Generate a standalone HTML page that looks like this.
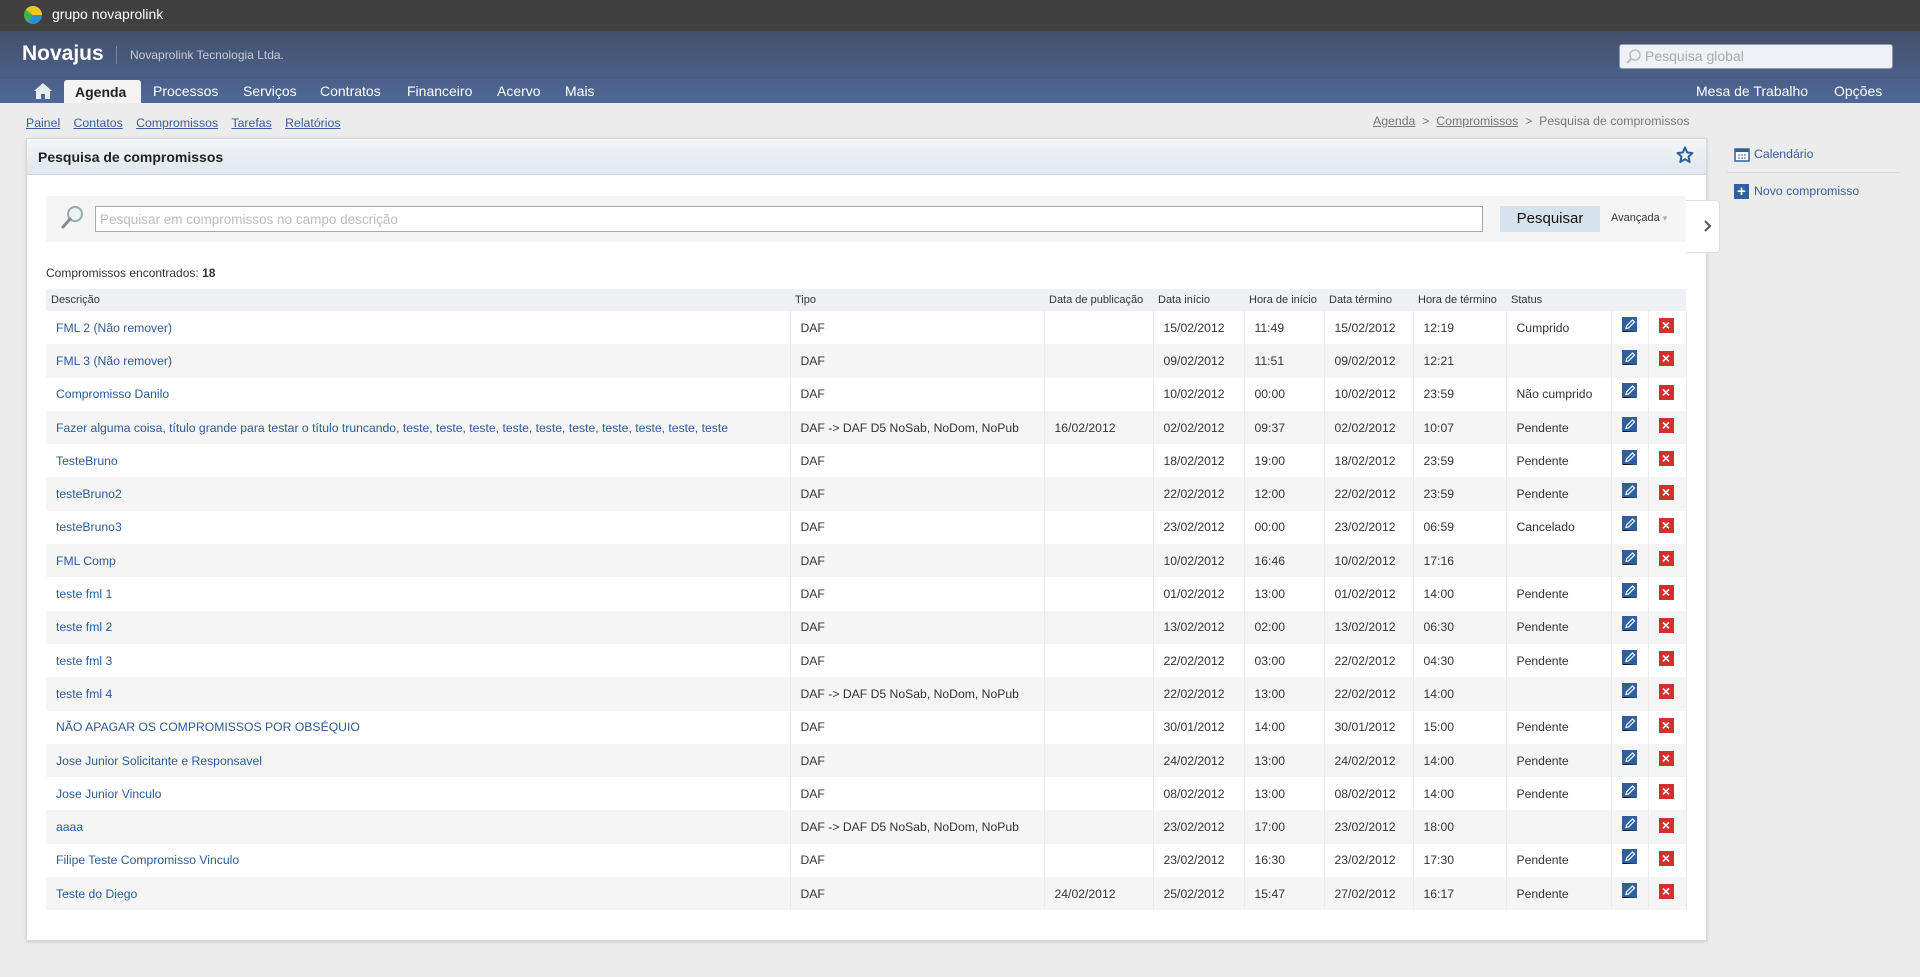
<!DOCTYPE html>
<html><head><meta charset="utf-8"><style>
*{box-sizing:border-box;margin:0;padding:0}
body{width:1920px;height:977px;background:#ececec;font-family:"Liberation Sans",Arial,sans-serif;position:relative;overflow:hidden;color:#333}
.abs{position:absolute}
#top{left:0;top:0;width:1920px;height:31px;background:#404040}
#hdr{left:0;top:31px;width:1920px;height:72px;background:linear-gradient(#44506a,#4e6897)}
#hdr .sep{position:absolute;left:0;top:46px;width:1920px;height:1px;background:#465678}
a{color:#2d5b95}
.nav{color:#fff;font-size:14px;top:83px}
#sub a{font-size:12.3px;color:#3a5d93;text-decoration:underline}
table{border-collapse:collapse;table-layout:fixed}
td,th{font-size:12.2px;height:33.3px;padding:0 0 0 10px;text-align:left;white-space:nowrap;overflow:hidden;border-right:1px solid #ececec}
th{height:22px;font-weight:normal;font-size:11px;padding-left:5px;background:#eef0f3;border-right:none;color:#333}
tr:nth-child(odd) td{background:#f5f5f5}
tr.w td{background:#fff}
td.d{color:#2d5b95;padding-left:10px}
.ed{display:inline-block;width:15px;height:15px;position:relative;top:-2px}
.x{display:inline-block;width:15px;height:15px;background:#d32f2f;color:#fff;font-size:14px;font-weight:bold;line-height:15px;text-align:center;position:relative;top:-2px}
</style></head><body>
<svg width="0" height="0" style="position:absolute"><defs><symbol id="pen" viewBox="0 0 15 15"><rect width="15" height="15" fill="#2f6198"/><path d="M4 11.5 L4.5 9 L10.5 3 L12.5 5 L6.5 11 Z" fill="none" stroke="#fff" stroke-width="1.2"/><path d="M1 15 L1 14 L15 14" stroke="#fff" stroke-width="0"/></symbol></defs></svg>
<div id="top" class="abs"></div>
<div class="abs" style="left:24px;top:6px;width:18px;height:18px;border-radius:50%;background:conic-gradient(#f3c521 0 25%,#2a8fd3 25% 60%,#3fb54b 60% 85%,#f3c521 85%)"></div>
<div class="abs" style="left:52px;top:6px;color:#fff;font-size:14px">grupo novaprolink</div>
<div id="hdr" class="abs"><div class="sep"></div></div>
<div class="abs" style="left:22px;top:42px;color:#fff;font-size:21px;font-weight:bold">Novajus</div>
<div class="abs" style="left:116px;top:46px;width:1px;height:18px;background:#7684a0"></div>
<div class="abs" style="left:130px;top:48px;color:#c5cbd8;font-size:12px">Novaprolink Tecnologia Ltda.</div>
<div class="abs" style="left:1619px;top:44px;width:274px;height:25px;background:#eef1f5;border:1px solid #8e9ab0;border-radius:3px;color:#aaa;font-size:14px;padding:3px 0 0 25px">Pesquisa global</div>
<svg class="abs" style="left:1625px;top:49px" width="16" height="16"><circle cx="10" cy="6" r="5" fill="none" stroke="#bbb" stroke-width="1.5"/><line x1="6" y1="10" x2="2" y2="14" stroke="#bbb" stroke-width="2"/></svg>
<svg class="abs" style="left:33px;top:82px" width="20" height="18"><path d="M10 1 L1 9 L3 9 L3 17 L8 17 L8 12 L12 12 L12 17 L17 17 L17 9 L19 9 Z" fill="#e8ecf2"/></svg>
<div class="abs" style="left:64px;top:80px;width:77px;height:23px;background:#f4f4f4;border-radius:3px 3px 0 0"></div>
<div class="abs" style="left:75px;top:84px;font-size:14px;font-weight:bold;color:#222">Agenda</div>
<div class="abs nav" style="left:153px">Processos</div>
<div class="abs nav" style="left:243px">Serviços</div>
<div class="abs nav" style="left:320px">Contratos</div>
<div class="abs nav" style="left:407px">Financeiro</div>
<div class="abs nav" style="left:497px">Acervo</div>
<div class="abs nav" style="left:565px">Mais</div>
<div class="abs nav" style="left:1696px">Mesa de Trabalho</div>
<div class="abs nav" style="left:1834px">Opções</div>
<div id="sub" class="abs" style="left:26px;top:114px"><a>Painel</a>&nbsp;&nbsp; <a>Contatos</a>&nbsp;&nbsp; <a>Compromissos</a>&nbsp;&nbsp; <a>Tarefas</a>&nbsp;&nbsp; <a>Relatórios</a></div>
<div class="abs" style="left:1373px;top:114px;font-size:12.3px;color:#777"><a style="color:#777;text-decoration:underline">Agenda</a> &nbsp;&gt;&nbsp; <a style="color:#777;text-decoration:underline">Compromissos</a> &nbsp;&gt;&nbsp; Pesquisa de compromissos</div>
<div class="abs" style="left:26px;top:138px;width:1681px;height:803px;background:#fff;border:1px solid #d8d8d8;box-shadow:0 1px 3px rgba(0,0,0,.15)"></div>
<div class="abs" style="left:27px;top:139px;width:1679px;height:36px;background:linear-gradient(#f3f6f9,#e1e7ee);border-bottom:1px solid #d0d6de"></div>
<div class="abs" style="left:38px;top:149px;font-size:14px;font-weight:bold;color:#222">Pesquisa de compromissos</div>
<svg class="abs" style="left:1676px;top:146px" width="18" height="18"><path d="M9 1.5 L11.2 6.5 L16.5 7 L12.5 10.6 L13.7 16 L9 13.2 L4.3 16 L5.5 10.6 L1.5 7 L6.8 6.5 Z" fill="none" stroke="#2f6198" stroke-width="2" stroke-linejoin="round"/></svg>
<div class="abs" style="left:1686px;top:200px;width:34px;height:53px;background:#fff;border:1px solid #ddd;border-left:none;border-radius:0 4px 4px 0"></div>
<svg class="abs" style="left:1703px;top:219px" width="10" height="14"><path d="M2 2 L7 7 L2 12" fill="none" stroke="#555" stroke-width="2"/></svg>
<svg class="abs" style="left:1734px;top:146px" width="16" height="16"><rect x="1" y="3" width="14" height="12" fill="#fff" stroke="#2f6198" stroke-width="1.5"/><rect x="1" y="3" width="14" height="3" fill="#2f6198"/><path d="M4 9h2M7 9h2M10 9h2M4 12h2M7 12h2M10 12h2" stroke="#2f6198"/></svg>
<div class="abs" style="left:1754px;top:147px;font-size:12.3px;color:#3a5d93">Calendário</div>
<div class="abs" style="left:1727px;top:172px;width:173px;height:1px;background:#d8d8d8"></div>
<div class="abs" style="left:1734px;top:184px;width:15px;height:15px;background:#2f6198;color:#fff;font-weight:bold;font-size:15px;line-height:15px;text-align:center">+</div>
<div class="abs" style="left:1754px;top:184px;font-size:12.3px;color:#3a5d93">Novo compromisso</div>
<div class="abs" style="left:46px;top:196px;width:1640px;height:46px;background:#f5f5f5"></div>
<svg class="abs" style="left:60px;top:204px" width="26" height="28"><circle cx="15" cy="10" r="7" fill="#eef3f7" stroke="#9aa" stroke-width="2"/><line x1="10" y1="15" x2="3" y2="23" stroke="#888" stroke-width="3" stroke-linecap="round"/></svg>
<div class="abs" style="left:95px;top:206px;width:1388px;height:26px;background:#fff;border:1px solid #a8a8a8;color:#bbb;font-size:13.5px;padding:5px 0 0 4px">Pesquisar em compromissos no campo descrição</div>
<div class="abs" style="left:1500px;top:206px;width:100px;height:26px;background:#d7e3ec;font-size:15px;text-align:center;padding-top:4px;color:#111">Pesquisar</div>
<div class="abs" style="left:1611px;top:212px;font-size:11px;color:#333">Avançada <span style="color:#aaa;font-size:9px">▾</span></div>
<div class="abs" style="left:46px;top:266px;font-size:12px">Compromissos encontrados: <b>18</b></div>
<table class="abs" style="left:46px;top:289px;width:1640px">
<colgroup><col style="width:744px"><col style="width:254px"><col style="width:109px"><col style="width:91px"><col style="width:80px"><col style="width:89px"><col style="width:93px"><col style="width:105px"><col style="width:37px"><col style="width:38px"></colgroup>
<tr class="w"><th>Descrição</th><th>Tipo</th><th>Data de publicação</th><th>Data início</th><th>Hora de início</th><th>Data término</th><th>Hora de término</th><th>Status</th><th></th><th></th></tr>
<tr class="w"><td class="d">FML 2 (Não remover)</td><td>DAF</td><td></td><td>15/02/2012</td><td>11:49</td><td>15/02/2012</td><td>12:19</td><td>Cumprido</td><td><svg class="ed"><use href="#pen"/></svg></td><td><span class="x">×</span></td></tr>
<tr><td class="d">FML 3 (Não remover)</td><td>DAF</td><td></td><td>09/02/2012</td><td>11:51</td><td>09/02/2012</td><td>12:21</td><td></td><td><svg class="ed"><use href="#pen"/></svg></td><td><span class="x">×</span></td></tr>
<tr class="w"><td class="d">Compromisso Danilo</td><td>DAF</td><td></td><td>10/02/2012</td><td>00:00</td><td>10/02/2012</td><td>23:59</td><td>Não cumprido</td><td><svg class="ed"><use href="#pen"/></svg></td><td><span class="x">×</span></td></tr>
<tr><td class="d">Fazer alguma coisa, título grande para testar o título truncando, teste, teste, teste, teste, teste, teste, teste, teste, teste, teste</td><td>DAF -&gt; DAF D5 NoSab, NoDom, NoPub</td><td>16/02/2012</td><td>02/02/2012</td><td>09:37</td><td>02/02/2012</td><td>10:07</td><td>Pendente</td><td><svg class="ed"><use href="#pen"/></svg></td><td><span class="x">×</span></td></tr>
<tr class="w"><td class="d">TesteBruno</td><td>DAF</td><td></td><td>18/02/2012</td><td>19:00</td><td>18/02/2012</td><td>23:59</td><td>Pendente</td><td><svg class="ed"><use href="#pen"/></svg></td><td><span class="x">×</span></td></tr>
<tr><td class="d">testeBruno2</td><td>DAF</td><td></td><td>22/02/2012</td><td>12:00</td><td>22/02/2012</td><td>23:59</td><td>Pendente</td><td><svg class="ed"><use href="#pen"/></svg></td><td><span class="x">×</span></td></tr>
<tr class="w"><td class="d">testeBruno3</td><td>DAF</td><td></td><td>23/02/2012</td><td>00:00</td><td>23/02/2012</td><td>06:59</td><td>Cancelado</td><td><svg class="ed"><use href="#pen"/></svg></td><td><span class="x">×</span></td></tr>
<tr><td class="d">FML Comp</td><td>DAF</td><td></td><td>10/02/2012</td><td>16:46</td><td>10/02/2012</td><td>17:16</td><td></td><td><svg class="ed"><use href="#pen"/></svg></td><td><span class="x">×</span></td></tr>
<tr class="w"><td class="d">teste fml 1</td><td>DAF</td><td></td><td>01/02/2012</td><td>13:00</td><td>01/02/2012</td><td>14:00</td><td>Pendente</td><td><svg class="ed"><use href="#pen"/></svg></td><td><span class="x">×</span></td></tr>
<tr><td class="d">teste fml 2</td><td>DAF</td><td></td><td>13/02/2012</td><td>02:00</td><td>13/02/2012</td><td>06:30</td><td>Pendente</td><td><svg class="ed"><use href="#pen"/></svg></td><td><span class="x">×</span></td></tr>
<tr class="w"><td class="d">teste fml 3</td><td>DAF</td><td></td><td>22/02/2012</td><td>03:00</td><td>22/02/2012</td><td>04:30</td><td>Pendente</td><td><svg class="ed"><use href="#pen"/></svg></td><td><span class="x">×</span></td></tr>
<tr><td class="d">teste fml 4</td><td>DAF -&gt; DAF D5 NoSab, NoDom, NoPub</td><td></td><td>22/02/2012</td><td>13:00</td><td>22/02/2012</td><td>14:00</td><td></td><td><svg class="ed"><use href="#pen"/></svg></td><td><span class="x">×</span></td></tr>
<tr class="w"><td class="d">NÃO APAGAR OS COMPROMISSOS POR OBSÉQUIO</td><td>DAF</td><td></td><td>30/01/2012</td><td>14:00</td><td>30/01/2012</td><td>15:00</td><td>Pendente</td><td><svg class="ed"><use href="#pen"/></svg></td><td><span class="x">×</span></td></tr>
<tr><td class="d">Jose Junior Solicitante e Responsavel</td><td>DAF</td><td></td><td>24/02/2012</td><td>13:00</td><td>24/02/2012</td><td>14:00</td><td>Pendente</td><td><svg class="ed"><use href="#pen"/></svg></td><td><span class="x">×</span></td></tr>
<tr class="w"><td class="d">Jose Junior Vinculo</td><td>DAF</td><td></td><td>08/02/2012</td><td>13:00</td><td>08/02/2012</td><td>14:00</td><td>Pendente</td><td><svg class="ed"><use href="#pen"/></svg></td><td><span class="x">×</span></td></tr>
<tr><td class="d">aaaa</td><td>DAF -&gt; DAF D5 NoSab, NoDom, NoPub</td><td></td><td>23/02/2012</td><td>17:00</td><td>23/02/2012</td><td>18:00</td><td></td><td><svg class="ed"><use href="#pen"/></svg></td><td><span class="x">×</span></td></tr>
<tr class="w"><td class="d">Filipe Teste Compromisso Vinculo</td><td>DAF</td><td></td><td>23/02/2012</td><td>16:30</td><td>23/02/2012</td><td>17:30</td><td>Pendente</td><td><svg class="ed"><use href="#pen"/></svg></td><td><span class="x">×</span></td></tr>
<tr><td class="d">Teste do Diego</td><td>DAF</td><td>24/02/2012</td><td>25/02/2012</td><td>15:47</td><td>27/02/2012</td><td>16:17</td><td>Pendente</td><td><svg class="ed"><use href="#pen"/></svg></td><td><span class="x">×</span></td></tr>
</table>
</body></html>
